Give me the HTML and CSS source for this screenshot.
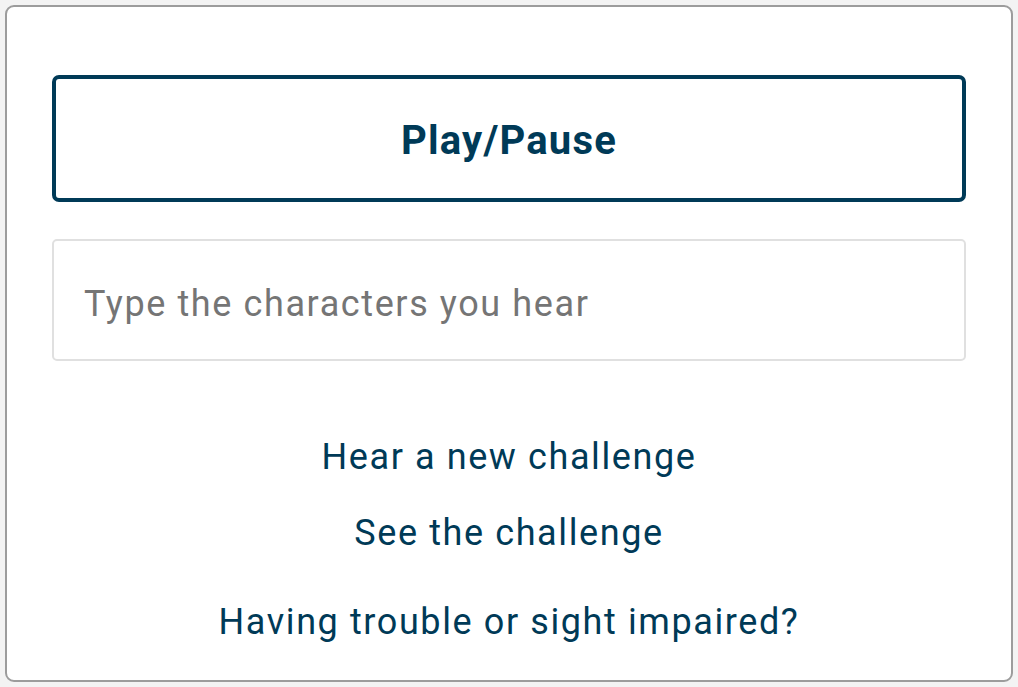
FILE: index.html
```html
<!DOCTYPE html>
<html lang="en">
<head>
<meta charset="utf-8">
<title>Audio challenge</title>
<link rel="stylesheet" href="styles.css">
</head>
<body>
<div class="card">
  <button class="play-btn" type="button">Play/Pause</button>
  <input class="answer" type="text" placeholder="Type the characters you hear">
  <nav class="links">
    <a class="link link-new" href="#">Hear a new challenge</a>
    <a class="link link-see" href="#">See the challenge</a>
    <a class="link link-help" href="#">Having trouble or sight impaired?</a>
  </nav>
</div>
</body>
</html>
```

FILE: styles.css
```css
html, body {
  margin: 0;
  padding: 0;
  background: #f3f3f3;
}
body {
  padding: 5px 6px 5px 5px;
  font-family: Roboto, "Liberation Sans", sans-serif;
}
.card {
  box-sizing: border-box;
  width: 1008px;
  height: 677px;
  background: #ffffff;
  border: 2px solid #9c9c9c;
  border-radius: 9px;
  padding: 68px 45px 0 45px;
  display: flex;
  flex-direction: column;
}
.play-btn {
  box-sizing: border-box;
  height: 127px;
  width: 100%;
  background: #ffffff;
  border: 4px solid #003a57;
  border-radius: 7px;
  color: #003a57;
  font-family: Roboto, "Liberation Sans", sans-serif;
  font-weight: 700;
  font-size: 40px;
  letter-spacing: 1.2px;
  padding: 4px 0 0 0;
  margin: 0;
  cursor: pointer;
}
.answer {
  box-sizing: border-box;
  margin-top: 37px;
  height: 122px;
  width: 100%;
  border: 2px solid #e0e0e0;
  border-radius: 5px;
  padding: 7px 0 0 30px;
  font-family: Roboto, "Liberation Sans", sans-serif;
  font-size: 36px;
  letter-spacing: 1.6px;
  color: #333333;
  outline: none;
}
.answer::placeholder {
  color: #757575;
  opacity: 1;
}
.links {
  display: flex;
  flex-direction: column;
  align-items: center;
  margin-top: 76px;
}
.link {
  display: block;
  color: #003a57;
  text-decoration: none;
  font-size: 36px;
  letter-spacing: 1.6px;
  line-height: 40px;
  height: 40px;
}
.link-see {
  margin-top: 36px;
}
.link-help {
  margin-top: 49px;
}
```
